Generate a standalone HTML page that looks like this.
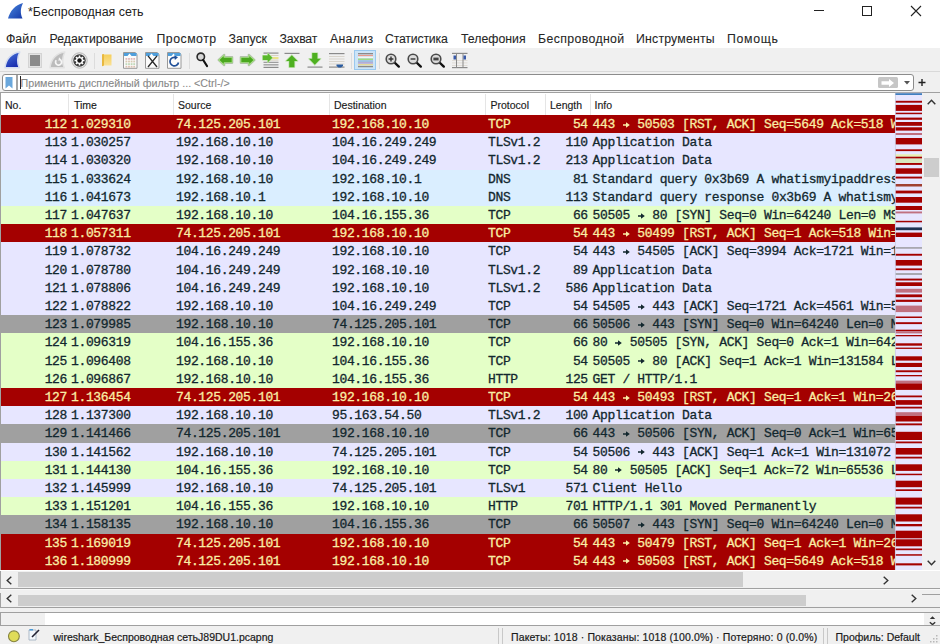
<!DOCTYPE html><html><head><meta charset="utf-8"><style>
*{margin:0;padding:0;box-sizing:border-box}
html,body{width:940px;height:644px;overflow:hidden;background:#f0f0f0;font-family:"Liberation Sans",sans-serif;color:#000;position:relative}
.a{position:absolute;white-space:pre}
.mi{position:absolute;font-size:12.3px;color:#262626;line-height:14px;white-space:pre;-webkit-text-stroke:0.08px #262626}
.hd{position:absolute;top:99px;font-size:10.5px;color:#1a1a1a;line-height:12px;white-space:pre;-webkit-text-stroke:0.15px #1a1a1a}
.sep{position:absolute;top:94px;width:1px;height:21px;background:#e5e5e5}
.row{position:absolute;left:1px;width:894px;height:18.2px;overflow:hidden;font-family:"Liberation Mono",monospace;font-size:13px;letter-spacing:-0.35px;line-height:19px}
.row span{position:absolute;top:0;white-space:pre;-webkit-text-stroke:0.3px currentColor}
.r{background:#a40000;color:#faeea6}
.l{background:#e7e6ff;color:#12272e}
.b{background:#daeeff;color:#12272e}
.g{background:#e4ffc7;color:#12272e}
.k{background:#a0a0a0;color:#12272e}
.tsep{position:absolute;top:53px;width:1px;height:16px;background:#dcdcdc}
svg{position:absolute;overflow:visible}
</style></head><body>
<div class="a" style="left:0;top:0;width:940px;height:48px;background:#fff"></div>
<svg style="left:7px;top:2px" width="18" height="18" viewBox="0 0 18 18"><defs><linearGradient id="fin" x1="0" y1="0" x2="1" y2="1"><stop offset="0" stop-color="#4a8ae0"/><stop offset="1" stop-color="#1538a8"/></linearGradient></defs><path d="M1 16.5 C3 9 8 3 16 1 C13.5 6 13 11 15.5 16.5 Z" fill="url(#fin)"/></svg>
<div class="a" style="left:28px;top:4.7px;font-size:12.4px;color:#222;line-height:14px">*Беспроводная сеть</div>
<div class="a" style="left:814px;top:10px;width:10px;height:1px;background:#222"></div>
<div class="a" style="left:862px;top:6px;width:10px;height:10px;border:1px solid #222"></div>
<svg style="left:910px;top:5px" width="12" height="12" viewBox="0 0 12 12"><path d="M1 1 L11 11 M11 1 L1 11" stroke="#222" stroke-width="1.1"/></svg>
<div class="mi" style="left:6px;top:31.5px;letter-spacing:0px">Файл</div>
<div class="mi" style="left:49.5px;top:31.5px;letter-spacing:0px">Редактирование</div>
<div class="mi" style="left:156.5px;top:31.5px;letter-spacing:0.5px">Просмотр</div>
<div class="mi" style="left:228.5px;top:31.5px;letter-spacing:0px">Запуск</div>
<div class="mi" style="left:279.5px;top:31.5px;letter-spacing:-0.25px">Захват</div>
<div class="mi" style="left:330px;top:31.5px;letter-spacing:0.3px">Анализ</div>
<div class="mi" style="left:385px;top:31.5px;letter-spacing:-0.2px">Статистика</div>
<div class="mi" style="left:461px;top:31.5px;letter-spacing:0px">Телефония</div>
<div class="mi" style="left:538px;top:31.5px;letter-spacing:0.38px">Беспроводной</div>
<div class="mi" style="left:636px;top:31.5px;letter-spacing:0.2px">Инструменты</div>
<div class="mi" style="left:727px;top:31.5px;letter-spacing:0.7px">Помощь</div>
<div class="a" style="left:0;top:48px;width:940px;height:24px;background:#f0f0f0;border-bottom:1px solid #d9d9d9"></div>
<svg style="left:4px;top:51px" width="17" height="18" viewBox="0 0 17 18"><defs><linearGradient id="fb" x1="0" y1="0" x2="0.5" y2="1"><stop offset="0" stop-color="#4a78dc"/><stop offset="1" stop-color="#1a2eb0"/></linearGradient></defs><path d="M1 16.8 C1.8 8.5 7.5 1.8 15.8 1 C13.6 5.5 13 11.5 15.2 16.8 Z" fill="url(#fb)" stroke="#d4dcf0" stroke-width="1.5" stroke-linejoin="round"/></svg>
<div class="a" style="left:27.5px;top:53px;width:14.5px;height:14.5px;background:#e4e4e4;border:1px solid #d4d4d4"></div>
<div class="a" style="left:29.5px;top:55px;width:10.5px;height:10.5px;background:#8c8c8c"></div>
<svg style="left:49px;top:51px" width="17" height="18" viewBox="0 0 17 18"><path d="M1 16.8 C1.8 8.5 7.5 1.8 15.8 1 C13.6 5.5 13 11.5 15.2 16.8 Z" fill="#bcbcbc" stroke="#e2e2e2" stroke-width="1.5" stroke-linejoin="round"/><path d="M7.3 9.2 A3 3 0 1 0 11.4 8.8" fill="none" stroke="#f6f6f6" stroke-width="1.7"/><path d="M10 6.3 L12.6 9 L9.4 9.8 Z" fill="#f6f6f6"/></svg>
<svg style="left:71px;top:52px" width="17" height="17" viewBox="0 0 17 17"><circle cx="8.5" cy="8.5" r="7.7" fill="#ececec" stroke="#b4b4b4" stroke-width="1"/><circle cx="8.5" cy="8.5" r="6.2" fill="#3c3c3c"/><g fill="#fff"><circle cx="8.5" cy="8.5" r="3.6"/><rect x="7.75" y="3.5" width="1.5" height="10" transform="rotate(0 8.5 8.5)"/><rect x="7.75" y="3.5" width="1.5" height="10" transform="rotate(45 8.5 8.5)"/><rect x="7.75" y="3.5" width="1.5" height="10" transform="rotate(90 8.5 8.5)"/><rect x="7.75" y="3.5" width="1.5" height="10" transform="rotate(135 8.5 8.5)"/></g><circle cx="8.5" cy="8.5" r="2.2" fill="#151515"/></svg>
<div class="tsep" style="left:94px"></div>
<svg style="left:101px;top:53px" width="12" height="14" viewBox="0 0 12 14"><defs><linearGradient id="fo" x1="0" y1="0" x2="0" y2="1"><stop offset="0" stop-color="#f6cf5a"/><stop offset="1" stop-color="#fbe39a"/></linearGradient></defs><path d="M1 1.5 H10.5 V12.5 H3 L1 13.2 Z" fill="url(#fo)"/><path d="M1 1.5 L3 1 V12.5 L1 13.2Z" fill="#e8b840"/></svg>
<svg style="left:122.5px;top:52px" width="15" height="17" viewBox="0 0 15 17"><path d="M0.5 0.5 H12.2 L14 2.3 V16.3 H0.5 Z" fill="#fbfbfb" stroke="#8e8e8e" stroke-width="0.9"/><rect x="1" y="1" width="12.5" height="3" fill="#4f9fdc"/><path d="M4.5 4 L6.5 1.6 L8.5 4 Z" fill="#fff"/><rect x="2.5" y="6.0" width="1.8" height="1.8" fill="#e0b8b8"/><rect x="5.1" y="6.0" width="1.8" height="1.8" fill="#e0b8b8"/><rect x="7.7" y="6.0" width="1.8" height="1.8" fill="#e0b8b8"/><rect x="10.3" y="6.0" width="1.8" height="1.8" fill="#e0b8b8"/><rect x="2.5" y="8.6" width="1.8" height="1.8" fill="#d8c8b0"/><rect x="5.1" y="8.6" width="1.8" height="1.8" fill="#d8c8b0"/><rect x="7.7" y="8.6" width="1.8" height="1.8" fill="#d8c8b0"/><rect x="10.3" y="8.6" width="1.8" height="1.8" fill="#d8c8b0"/><rect x="2.5" y="11.2" width="1.8" height="1.8" fill="#c0d8b8"/><rect x="5.1" y="11.2" width="1.8" height="1.8" fill="#c0d8b8"/><rect x="7.7" y="11.2" width="1.8" height="1.8" fill="#c0d8b8"/><rect x="10.3" y="11.2" width="1.8" height="1.8" fill="#c0d8b8"/><rect x="2.5" y="13.8" width="1.8" height="1.8" fill="#dcc0b0"/><rect x="5.1" y="13.8" width="1.8" height="1.8" fill="#dcc0b0"/><rect x="7.7" y="13.8" width="1.8" height="1.8" fill="#dcc0b0"/><rect x="10.3" y="13.8" width="1.8" height="1.8" fill="#dcc0b0"/></svg>
<svg style="left:144.5px;top:52px" width="15" height="17" viewBox="0 0 15 17"><path d="M0.5 0.5 H12.2 L14 2.3 V16.3 H0.5 Z" fill="#fbfbfb" stroke="#8e8e8e" stroke-width="0.9"/><rect x="1" y="1" width="12.5" height="3" fill="#4f9fdc"/><path d="M4.5 4 L6.5 1.6 L8.5 4 Z" fill="#fff"/><path d="M3 3.8 L12 15 M12 3.8 L3 15" stroke="#2a2a2a" stroke-width="1.35"/></svg>
<svg style="left:166.5px;top:52px" width="15" height="17" viewBox="0 0 15 17"><path d="M0.5 0.5 H12.2 L14 2.3 V16.3 H0.5 Z" fill="#fbfbfb" stroke="#8e8e8e" stroke-width="0.9"/><rect x="1" y="1" width="12.5" height="3" fill="#4f9fdc"/><path d="M4.5 4 L6.5 1.6 L8.5 4 Z" fill="#fff"/><path d="M11.5 10.5 A4.3 4.3 0 1 1 8.8 5.6" fill="none" stroke="#1f4f98" stroke-width="1.7"/><path d="M7.3 3.2 L11 5.3 L7.9 8 Z" fill="#1f4f98"/></svg>
<div class="tsep" style="left:188.5px"></div>
<svg style="left:196px;top:52px" width="13" height="16" viewBox="0 0 13 16"><circle cx="4.8" cy="4.8" r="3.7" fill="#d6d6d6" stroke="#2a2a2a" stroke-width="1.6"/><path d="M7.2 8 L11 14" stroke="#111" stroke-width="2.2" stroke-linecap="round"/></svg>
<svg style="left:216.5px;top:53px" width="17" height="14" viewBox="0 0 17 14"><g><path d="M1.6 7 L7.2 1.8 V4.2 H15.2 V9.8 H7.2 V12.2 Z" fill="none" stroke="#b4bab4" stroke-width="2.2" stroke-linejoin="round"/><path d="M1.6 7 L7.2 1.8 V4.2 H15.2 V9.8 H7.2 V12.2 Z" fill="#4aa81e" stroke="#a8dc88" stroke-width="1.1" stroke-linejoin="round"/></g></svg>
<svg style="left:238.5px;top:53px" width="17" height="14" viewBox="0 0 17 14"><g transform="translate(17 0) scale(-1 1)"><path d="M1.6 7 L7.2 1.8 V4.2 H15.2 V9.8 H7.2 V12.2 Z" fill="none" stroke="#b4bab4" stroke-width="2.2" stroke-linejoin="round"/><path d="M1.6 7 L7.2 1.8 V4.2 H15.2 V9.8 H7.2 V12.2 Z" fill="#4aa81e" stroke="#a8dc88" stroke-width="1.1" stroke-linejoin="round"/></g></svg>
<svg style="left:262px;top:52px" width="17" height="17" viewBox="0 0 17 17"><g fill="#8a8a8a"><rect x="1.5" y="0.5" width="15" height="1.2"/><rect x="1.5" y="9.8" width="15" height="1"/><rect x="1.5" y="12.3" width="15" height="1.1"/><rect x="1.5" y="14.8" width="15" height="1.2"/></g><g fill="#d8d0c0"><rect x="1.5" y="3" width="15" height="1"/><rect x="8" y="7.6" width="8.5" height="1"/></g><rect x="9" y="5.2" width="7.5" height="1.6" fill="#e8e070"/><path d="M0.8 3.6 H5.8 V1.3 L10.3 5.8 L5.8 10.3 V8 H0.8 Z" fill="#5ab82c" stroke="#b8e2a0" stroke-width="1.2" stroke-linejoin="round" paint-order="stroke"/></svg>
<svg style="left:284px;top:52px" width="16" height="17" viewBox="0 0 16 17"><rect x="0.5" y="0.8" width="15" height="1.2" fill="#8a8a8a"/><path d="M7.8 3.2 L13.6 9 H10.4 V15.3 H5.2 V9 H2 Z" fill="#4eb020" stroke="#c4e4b4" stroke-width="1.6" stroke-linejoin="round" paint-order="stroke"/></svg>
<svg style="left:306.5px;top:52px" width="16" height="17" viewBox="0 0 16 17"><rect x="0.5" y="14.5" width="15" height="1.2" fill="#8a8a8a"/><path d="M5.2 1 H10.4 V6.8 H13.6 L7.8 12.8 L2 6.8 H5.2 Z" fill="#4eb020" stroke="#c4e4b4" stroke-width="1.6" stroke-linejoin="round" paint-order="stroke"/></svg>
<svg style="left:329px;top:52px" width="16" height="17" viewBox="0 0 16 17"><rect x="0" y="1" width="15.5" height="1.2" fill="#8a8a8a"/><g fill="#d8d4cc"><rect x="0" y="4" width="15.5" height="1"/><rect x="0" y="6.5" width="15.5" height="1"/><rect x="0" y="9" width="15.5" height="1"/><rect x="0" y="11.5" width="15.5" height="1"/></g><rect x="0" y="14.5" width="15.5" height="1.2" fill="#8a8a8a"/><path d="M7.5 12.5 H14 V14 L12 15.5 H9.5 L7.5 14 Z" fill="#2a5ca0"/></svg>
<div class="tsep" style="left:350.5px"></div>
<div class="a" style="left:354px;top:50px;width:22px;height:20px;background:#cce4f7;border:1px solid #99c8ee"></div>
<svg style="left:358px;top:53px" width="15" height="15" viewBox="0 0 15 15"><rect x="0" y="0.00" width="15" height="1.3" fill="#8a8a8a"/><rect x="0" y="1.85" width="15" height="1.3" fill="#e89a8a"/><rect x="0" y="3.70" width="15" height="1.3" fill="#f4f4f4"/><rect x="0" y="5.55" width="15" height="1.3" fill="#9ad870"/><rect x="0" y="7.40" width="15" height="1.3" fill="#8ab0d8"/><rect x="0" y="9.25" width="15" height="1.3" fill="#b098c8"/><rect x="0" y="11.10" width="15" height="1.3" fill="#e8d890"/><rect x="0" y="12.95" width="15" height="1.3" fill="#8a8a8a"/></svg>
<div class="tsep" style="left:379px"></div>
<svg style="left:384.5px;top:52.5px" width="16" height="15" viewBox="0 0 16 15"><path d="M8.5 8.5 L13.8 13.6" stroke="#111" stroke-width="2.4" stroke-linecap="round"/><circle cx="6" cy="6" r="4.8" fill="#dcdcdc" stroke="#4a4a4a" stroke-width="1.6"/><path d="M6 3.6 V8.4 M3.6 6 H8.4" stroke="#333" stroke-width="1.4"/></svg>
<svg style="left:407px;top:52.5px" width="16" height="15" viewBox="0 0 16 15"><path d="M8.5 8.5 L13.8 13.6" stroke="#111" stroke-width="2.4" stroke-linecap="round"/><circle cx="6" cy="6" r="4.8" fill="#dcdcdc" stroke="#4a4a4a" stroke-width="1.6"/><path d="M3.6 6 H8.4" stroke="#333" stroke-width="1.4"/></svg>
<svg style="left:429.5px;top:52.5px" width="16" height="15" viewBox="0 0 16 15"><path d="M8.5 8.5 L13.8 13.6" stroke="#111" stroke-width="2.4" stroke-linecap="round"/><circle cx="6" cy="6" r="4.8" fill="#dcdcdc" stroke="#4a4a4a" stroke-width="1.6"/><rect x="3.4" y="4.6" width="5.2" height="2.8" fill="#444"/></svg>
<svg style="left:452px;top:52px" width="16" height="17" viewBox="0 0 16 17"><rect x="0" y="0.8" width="15.5" height="1.2" fill="#8a8a8a"/><rect x="0" y="15" width="15.5" height="1.2" fill="#8a8a8a"/><g fill="#dcd8d0"><rect x="0" y="8" width="15.5" height="0.8"/><rect x="0" y="10.5" width="15.5" height="0.8"/><rect x="0" y="13" width="15.5" height="0.8"/></g><rect x="4" y="2" width="1" height="13" fill="#8a8a8a"/><rect x="10.5" y="2" width="1" height="13" fill="#8a8a8a"/><rect x="1.5" y="3.5" width="2.5" height="4" fill="#3a5aa8"/><rect x="11.5" y="3.5" width="2.5" height="4" fill="#3a5aa8"/></svg>
<div class="a" style="left:2px;top:74px;width:912px;height:17px;background:#fff;border:1px solid #8c8c8c;border-radius:3px"></div>
<svg style="left:5px;top:77px" width="8" height="12" viewBox="0 0 8 12"><path d="M0.5 0 H7.5 V11.5 L4 8.5 L0.5 11.5 Z" fill="#6aa7dc"/></svg>
<div class="a" style="left:16px;top:75px;width:1.6px;height:15px;background:#a4a4a4"></div>
<div class="a" style="left:20px;top:76px;width:1px;height:13px;background:#222"></div>
<div class="a" style="left:20.5px;top:77px;font-size:10.7px;color:#888;line-height:13px;-webkit-text-stroke:0.1px #888">Применить дисплейный фильтр ... &lt;Ctrl-/&gt;</div>
<div class="a" style="left:878px;top:77px;width:19.5px;height:11px;background:#c6c6c6;border-radius:1.5px"></div>
<svg style="left:881px;top:77.5px" width="14" height="10" viewBox="0 0 14 10"><path d="M0.5 3.2 H8 V1 L13 5 L8 9 V6.8 H0.5 Z" fill="#fff"/></svg>
<svg style="left:904px;top:81px" width="6" height="4" viewBox="0 0 6 4"><path d="M0 0 H6 L3 3.5 Z" fill="#555"/></svg>
<svg style="left:917.5px;top:79px" width="8" height="7" viewBox="0 0 8 7"><path d="M4 0 V7 M0.5 3.5 H7.5" stroke="#222" stroke-width="1.4"/></svg>
<div class="a" style="left:0;top:92px;width:940px;height:1px;background:#a0a0a0"></div>
<div class="a" style="left:0;top:93px;width:923px;height:478px;background:#fff;border-left:1px solid #a0a0a0"></div>
<div class="sep" style="left:68px"></div>
<div class="sep" style="left:173px"></div>
<div class="sep" style="left:329px"></div>
<div class="sep" style="left:485px"></div>
<div class="sep" style="left:545px"></div>
<div class="sep" style="left:590px"></div>
<div class="hd" style="left:5px">No.</div>
<div class="hd" style="left:74px">Time</div>
<div class="hd" style="left:178px">Source</div>
<div class="hd" style="left:334px">Destination</div>
<div class="hd" style="left:490.5px">Protocol</div>
<div class="hd" style="left:550px">Length</div>
<div class="hd" style="left:594.5px">Info</div>
<div class="row r" style="top:115.00px"><span style="right:828px">112</span><span style="left:70px">1.029310</span><span style="left:175px">74.125.205.101</span><span style="left:331px">192.168.10.10</span><span style="left:487px">TCP</span><span style="right:307.20000000000005px">54</span><span style="left:591.6px">443 <i style="display:inline-block;width:7.45px;height:18px;position:relative;vertical-align:top"><svg style="left:0.5px;top:6.7px" width="7" height="6" viewBox="0 0 7 6"><path d="M0 3 H4.2" stroke="currentColor" stroke-width="1.5"/><path d="M3 0.2 L6.8 3 L3 5.8 Z" fill="currentColor"/></svg></i> 50503 [RST, ACK] Seq=5649 Ack=518 Win=0 Len=0</span></div>
<div class="row l" style="top:133.20px"><span style="right:828px">113</span><span style="left:70px">1.030257</span><span style="left:175px">192.168.10.10</span><span style="left:331px">104.16.249.249</span><span style="left:487px">TLSv1.2</span><span style="right:307.20000000000005px">110</span><span style="left:591.6px">Application Data</span></div>
<div class="row l" style="top:151.40px"><span style="right:828px">114</span><span style="left:70px">1.030320</span><span style="left:175px">192.168.10.10</span><span style="left:331px">104.16.249.249</span><span style="left:487px">TLSv1.2</span><span style="right:307.20000000000005px">213</span><span style="left:591.6px">Application Data</span></div>
<div class="row b" style="top:169.60px"><span style="right:828px">115</span><span style="left:70px">1.033624</span><span style="left:175px">192.168.10.10</span><span style="left:331px">192.168.10.1</span><span style="left:487px">DNS</span><span style="right:307.20000000000005px">81</span><span style="left:591.6px">Standard query 0x3b69 A whatismyipaddress.com</span></div>
<div class="row b" style="top:187.80px"><span style="right:828px">116</span><span style="left:70px">1.041673</span><span style="left:175px">192.168.10.1</span><span style="left:331px">192.168.10.10</span><span style="left:487px">DNS</span><span style="right:307.20000000000005px">113</span><span style="left:591.6px">Standard query response 0x3b69 A whatismyipaddress.com</span></div>
<div class="row g" style="top:206.00px"><span style="right:828px">117</span><span style="left:70px">1.047637</span><span style="left:175px">192.168.10.10</span><span style="left:331px">104.16.155.36</span><span style="left:487px">TCP</span><span style="right:307.20000000000005px">66</span><span style="left:591.6px">50505 <i style="display:inline-block;width:7.45px;height:18px;position:relative;vertical-align:top"><svg style="left:0.5px;top:6.7px" width="7" height="6" viewBox="0 0 7 6"><path d="M0 3 H4.2" stroke="currentColor" stroke-width="1.5"/><path d="M3 0.2 L6.8 3 L3 5.8 Z" fill="currentColor"/></svg></i> 80 [SYN] Seq=0 Win=64240 Len=0 MSS=1460</span></div>
<div class="row r" style="top:224.20px"><span style="right:828px">118</span><span style="left:70px">1.057311</span><span style="left:175px">74.125.205.101</span><span style="left:331px">192.168.10.10</span><span style="left:487px">TCP</span><span style="right:307.20000000000005px">54</span><span style="left:591.6px">443 <i style="display:inline-block;width:7.45px;height:18px;position:relative;vertical-align:top"><svg style="left:0.5px;top:6.7px" width="7" height="6" viewBox="0 0 7 6"><path d="M0 3 H4.2" stroke="currentColor" stroke-width="1.5"/><path d="M3 0.2 L6.8 3 L3 5.8 Z" fill="currentColor"/></svg></i> 50499 [RST, ACK] Seq=1 Ack=518 Win=0 Len=0</span></div>
<div class="row l" style="top:242.40px"><span style="right:828px">119</span><span style="left:70px">1.078732</span><span style="left:175px">104.16.249.249</span><span style="left:331px">192.168.10.10</span><span style="left:487px">TCP</span><span style="right:307.20000000000005px">54</span><span style="left:591.6px">443 <i style="display:inline-block;width:7.45px;height:18px;position:relative;vertical-align:top"><svg style="left:0.5px;top:6.7px" width="7" height="6" viewBox="0 0 7 6"><path d="M0 3 H4.2" stroke="currentColor" stroke-width="1.5"/><path d="M3 0.2 L6.8 3 L3 5.8 Z" fill="currentColor"/></svg></i> 54505 [ACK] Seq=3994 Ack=1721 Win=128 Len=0</span></div>
<div class="row l" style="top:260.60px"><span style="right:828px">120</span><span style="left:70px">1.078780</span><span style="left:175px">104.16.249.249</span><span style="left:331px">192.168.10.10</span><span style="left:487px">TLSv1.2</span><span style="right:307.20000000000005px">89</span><span style="left:591.6px">Application Data</span></div>
<div class="row l" style="top:278.80px"><span style="right:828px">121</span><span style="left:70px">1.078806</span><span style="left:175px">104.16.249.249</span><span style="left:331px">192.168.10.10</span><span style="left:487px">TLSv1.2</span><span style="right:307.20000000000005px">586</span><span style="left:591.6px">Application Data</span></div>
<div class="row l" style="top:297.00px"><span style="right:828px">122</span><span style="left:70px">1.078822</span><span style="left:175px">192.168.10.10</span><span style="left:331px">104.16.249.249</span><span style="left:487px">TCP</span><span style="right:307.20000000000005px">54</span><span style="left:591.6px">54505 <i style="display:inline-block;width:7.45px;height:18px;position:relative;vertical-align:top"><svg style="left:0.5px;top:6.7px" width="7" height="6" viewBox="0 0 7 6"><path d="M0 3 H4.2" stroke="currentColor" stroke-width="1.5"/><path d="M3 0.2 L6.8 3 L3 5.8 Z" fill="currentColor"/></svg></i> 443 [ACK] Seq=1721 Ack=4561 Win=512 Len=0</span></div>
<div class="row k" style="top:315.20px"><span style="right:828px">123</span><span style="left:70px">1.079985</span><span style="left:175px">192.168.10.10</span><span style="left:331px">74.125.205.101</span><span style="left:487px">TCP</span><span style="right:307.20000000000005px">66</span><span style="left:591.6px">50506 <i style="display:inline-block;width:7.45px;height:18px;position:relative;vertical-align:top"><svg style="left:0.5px;top:6.7px" width="7" height="6" viewBox="0 0 7 6"><path d="M0 3 H4.2" stroke="currentColor" stroke-width="1.5"/><path d="M3 0.2 L6.8 3 L3 5.8 Z" fill="currentColor"/></svg></i> 443 [SYN] Seq=0 Win=64240 Len=0 MSS=1460</span></div>
<div class="row g" style="top:333.40px"><span style="right:828px">124</span><span style="left:70px">1.096319</span><span style="left:175px">104.16.155.36</span><span style="left:331px">192.168.10.10</span><span style="left:487px">TCP</span><span style="right:307.20000000000005px">66</span><span style="left:591.6px">80 <i style="display:inline-block;width:7.45px;height:18px;position:relative;vertical-align:top"><svg style="left:0.5px;top:6.7px" width="7" height="6" viewBox="0 0 7 6"><path d="M0 3 H4.2" stroke="currentColor" stroke-width="1.5"/><path d="M3 0.2 L6.8 3 L3 5.8 Z" fill="currentColor"/></svg></i> 50505 [SYN, ACK] Seq=0 Ack=1 Win=64240 Len=0</span></div>
<div class="row g" style="top:351.60px"><span style="right:828px">125</span><span style="left:70px">1.096408</span><span style="left:175px">192.168.10.10</span><span style="left:331px">104.16.155.36</span><span style="left:487px">TCP</span><span style="right:307.20000000000005px">54</span><span style="left:591.6px">50505 <i style="display:inline-block;width:7.45px;height:18px;position:relative;vertical-align:top"><svg style="left:0.5px;top:6.7px" width="7" height="6" viewBox="0 0 7 6"><path d="M0 3 H4.2" stroke="currentColor" stroke-width="1.5"/><path d="M3 0.2 L6.8 3 L3 5.8 Z" fill="currentColor"/></svg></i> 80 [ACK] Seq=1 Ack=1 Win=131584 Len=0</span></div>
<div class="row g" style="top:369.80px"><span style="right:828px">126</span><span style="left:70px">1.096867</span><span style="left:175px">192.168.10.10</span><span style="left:331px">104.16.155.36</span><span style="left:487px">HTTP</span><span style="right:307.20000000000005px">125</span><span style="left:591.6px">GET / HTTP/1.1</span></div>
<div class="row r" style="top:388.00px"><span style="right:828px">127</span><span style="left:70px">1.136454</span><span style="left:175px">74.125.205.101</span><span style="left:331px">192.168.10.10</span><span style="left:487px">TCP</span><span style="right:307.20000000000005px">54</span><span style="left:591.6px">443 <i style="display:inline-block;width:7.45px;height:18px;position:relative;vertical-align:top"><svg style="left:0.5px;top:6.7px" width="7" height="6" viewBox="0 0 7 6"><path d="M0 3 H4.2" stroke="currentColor" stroke-width="1.5"/><path d="M3 0.2 L6.8 3 L3 5.8 Z" fill="currentColor"/></svg></i> 50493 [RST, ACK] Seq=1 Ack=1 Win=263 Len=0</span></div>
<div class="row l" style="top:406.20px"><span style="right:828px">128</span><span style="left:70px">1.137300</span><span style="left:175px">192.168.10.10</span><span style="left:331px">95.163.54.50</span><span style="left:487px">TLSv1.2</span><span style="right:307.20000000000005px">100</span><span style="left:591.6px">Application Data</span></div>
<div class="row k" style="top:424.40px"><span style="right:828px">129</span><span style="left:70px">1.141466</span><span style="left:175px">74.125.205.101</span><span style="left:331px">192.168.10.10</span><span style="left:487px">TCP</span><span style="right:307.20000000000005px">66</span><span style="left:591.6px">443 <i style="display:inline-block;width:7.45px;height:18px;position:relative;vertical-align:top"><svg style="left:0.5px;top:6.7px" width="7" height="6" viewBox="0 0 7 6"><path d="M0 3 H4.2" stroke="currentColor" stroke-width="1.5"/><path d="M3 0.2 L6.8 3 L3 5.8 Z" fill="currentColor"/></svg></i> 50506 [SYN, ACK] Seq=0 Ack=1 Win=65535 Len=0</span></div>
<div class="row l" style="top:442.60px"><span style="right:828px">130</span><span style="left:70px">1.141562</span><span style="left:175px">192.168.10.10</span><span style="left:331px">74.125.205.101</span><span style="left:487px">TCP</span><span style="right:307.20000000000005px">54</span><span style="left:591.6px">50506 <i style="display:inline-block;width:7.45px;height:18px;position:relative;vertical-align:top"><svg style="left:0.5px;top:6.7px" width="7" height="6" viewBox="0 0 7 6"><path d="M0 3 H4.2" stroke="currentColor" stroke-width="1.5"/><path d="M3 0.2 L6.8 3 L3 5.8 Z" fill="currentColor"/></svg></i> 443 [ACK] Seq=1 Ack=1 Win=131072 Len=0</span></div>
<div class="row g" style="top:460.80px"><span style="right:828px">131</span><span style="left:70px">1.144130</span><span style="left:175px">104.16.155.36</span><span style="left:331px">192.168.10.10</span><span style="left:487px">TCP</span><span style="right:307.20000000000005px">54</span><span style="left:591.6px">80 <i style="display:inline-block;width:7.45px;height:18px;position:relative;vertical-align:top"><svg style="left:0.5px;top:6.7px" width="7" height="6" viewBox="0 0 7 6"><path d="M0 3 H4.2" stroke="currentColor" stroke-width="1.5"/><path d="M3 0.2 L6.8 3 L3 5.8 Z" fill="currentColor"/></svg></i> 50505 [ACK] Seq=1 Ack=72 Win=65536 Len=0</span></div>
<div class="row l" style="top:479.00px"><span style="right:828px">132</span><span style="left:70px">1.145999</span><span style="left:175px">192.168.10.10</span><span style="left:331px">74.125.205.101</span><span style="left:487px">TLSv1</span><span style="right:307.20000000000005px">571</span><span style="left:591.6px">Client Hello</span></div>
<div class="row g" style="top:497.20px"><span style="right:828px">133</span><span style="left:70px">1.151201</span><span style="left:175px">104.16.155.36</span><span style="left:331px">192.168.10.10</span><span style="left:487px">HTTP</span><span style="right:307.20000000000005px">701</span><span style="left:591.6px">HTTP/1.1 301 Moved Permanently</span></div>
<div class="row k" style="top:515.40px"><span style="right:828px">134</span><span style="left:70px">1.158135</span><span style="left:175px">192.168.10.10</span><span style="left:331px">104.16.155.36</span><span style="left:487px">TCP</span><span style="right:307.20000000000005px">66</span><span style="left:591.6px">50507 <i style="display:inline-block;width:7.45px;height:18px;position:relative;vertical-align:top"><svg style="left:0.5px;top:6.7px" width="7" height="6" viewBox="0 0 7 6"><path d="M0 3 H4.2" stroke="currentColor" stroke-width="1.5"/><path d="M3 0.2 L6.8 3 L3 5.8 Z" fill="currentColor"/></svg></i> 443 [SYN] Seq=0 Win=64240 Len=0 MSS=1460</span></div>
<div class="row r" style="top:533.60px"><span style="right:828px">135</span><span style="left:70px">1.169019</span><span style="left:175px">74.125.205.101</span><span style="left:331px">192.168.10.10</span><span style="left:487px">TCP</span><span style="right:307.20000000000005px">54</span><span style="left:591.6px">443 <i style="display:inline-block;width:7.45px;height:18px;position:relative;vertical-align:top"><svg style="left:0.5px;top:6.7px" width="7" height="6" viewBox="0 0 7 6"><path d="M0 3 H4.2" stroke="currentColor" stroke-width="1.5"/><path d="M3 0.2 L6.8 3 L3 5.8 Z" fill="currentColor"/></svg></i> 50479 [RST, ACK] Seq=1 Ack=1 Win=263 Len=0</span></div>
<div class="row r" style="top:551.80px"><span style="right:828px">136</span><span style="left:70px">1.180999</span><span style="left:175px">74.125.205.101</span><span style="left:331px">192.168.10.10</span><span style="left:487px">TCP</span><span style="right:307.20000000000005px">54</span><span style="left:591.6px">443 <i style="display:inline-block;width:7.45px;height:18px;position:relative;vertical-align:top"><svg style="left:0.5px;top:6.7px" width="7" height="6" viewBox="0 0 7 6"><path d="M0 3 H4.2" stroke="currentColor" stroke-width="1.5"/><path d="M3 0.2 L6.8 3 L3 5.8 Z" fill="currentColor"/></svg></i> 50503 [RST, ACK] Seq=5649 Ack=518 Win=0 Len=0</span></div>
<svg style="left:895px;top:93px" width="28" height="478" viewBox="0 0 28 478">
<rect x="0" y="0" width="27.5" height="478" fill="#e7e6ff"/>
<rect x="0" y="0" width="27.5" height="2" fill="#3f7fc0"/>
<rect x="0.5" y="7.8" width="27" height="1.9" fill="#a40000"/>
<rect x="0.5" y="11.9" width="27" height="6.0" fill="#a40000"/>
<rect x="0.5" y="19.7" width="27" height="1.5" fill="#a40000"/>
<rect x="0.5" y="24.6" width="27" height="2.2" fill="#a40000"/>
<rect x="0.5" y="29.0" width="27" height="3.8" fill="#a40000"/>
<rect x="0.5" y="34.3" width="27" height="3.3" fill="#a40000"/>
<rect x="0.5" y="40.0" width="27" height="2.0" fill="#c07080"/>
<rect x="0.5" y="45.0" width="27" height="6.4" fill="#a40000"/>
<rect x="0.5" y="56.3" width="27" height="1.8" fill="#a40000"/>
<rect x="0.5" y="61.3" width="27" height="2.4" fill="#e8f0b0"/>
<rect x="0.5" y="63.7" width="27" height="1.9" fill="#a40000"/>
<rect x="0.5" y="65.6" width="27" height="4.4" fill="#d8e8c0"/>
<rect x="0.5" y="70.0" width="27" height="1.9" fill="#a40000"/>
<rect x="0.5" y="75.3" width="27" height="5.5" fill="#a40000"/>
<rect x="0.5" y="83.6" width="27" height="1.9" fill="#a40000"/>
<rect x="0.5" y="91.0" width="27" height="2.5" fill="#a04030"/>
<rect x="0.5" y="97.6" width="27" height="2.8" fill="#a40000"/>
<rect x="0.5" y="104.0" width="27" height="5.7" fill="#a40000"/>
<rect x="0.5" y="113.0" width="27" height="4.0" fill="#a40000"/>
<rect x="0.5" y="118.5" width="27" height="1.9" fill="#c07080"/>
<rect x="0.5" y="127.8" width="27" height="1.5" fill="#a40000"/>
<rect x="0.5" y="134.4" width="27" height="2.8" fill="#203050"/>
<rect x="0.5" y="139.6" width="27" height="4.4" fill="#a40000"/>
<rect x="0.5" y="154.0" width="27" height="1.8" fill="#a8a8b0"/>
<rect x="0.5" y="160.8" width="27" height="1.9" fill="#a40000"/>
<rect x="0.5" y="167.0" width="27" height="5.6" fill="#a40000"/>
<rect x="0.5" y="175.4" width="27" height="1.8" fill="#a40000"/>
<rect x="0.5" y="180.0" width="27" height="2.0" fill="#a8a8b0"/>
<rect x="0.5" y="185.6" width="27" height="1.9" fill="#a40000"/>
<rect x="0.5" y="189.3" width="27" height="3.7" fill="#a40000"/>
<rect x="0.5" y="195.8" width="27" height="3.8" fill="#c07080"/>
<rect x="0.5" y="201.4" width="27" height="2.8" fill="#a40000"/>
<rect x="0.5" y="206.7" width="27" height="2.2" fill="#a40000"/>
<rect x="0.5" y="212.6" width="27" height="6.5" fill="#c07080"/>
<rect x="0.5" y="223.5" width="27" height="1.5" fill="#a40000"/>
<rect x="0.5" y="229.2" width="27" height="1.9" fill="#a40000"/>
<rect x="0.5" y="236.7" width="27" height="1.5" fill="#a40000"/>
<rect x="0.5" y="238.2" width="27" height="2.2" fill="#c07080"/>
<rect x="0.5" y="242.0" width="27" height="1.3" fill="#a40000"/>
<rect x="0.5" y="250.3" width="27" height="2.4" fill="#a40000"/>
<rect x="0.5" y="254.6" width="27" height="1.3" fill="#a40000"/>
<rect x="0.5" y="263.3" width="27" height="4.3" fill="#a40000"/>
<rect x="0.5" y="269.9" width="27" height="4.1" fill="#a40000"/>
<rect x="0.5" y="277.3" width="27" height="1.9" fill="#a40000"/>
<rect x="0.5" y="282.0" width="27" height="1.3" fill="#a40000"/>
<rect x="0.5" y="287.6" width="27" height="2.8" fill="#c07080"/>
<rect x="0.5" y="290.4" width="27" height="6.5" fill="#a40000"/>
<rect x="0.5" y="302.5" width="27" height="1.8" fill="#a40000"/>
<rect x="0.5" y="307.1" width="27" height="4.7" fill="#a40000"/>
<rect x="0.5" y="313.7" width="27" height="1.8" fill="#a40000"/>
<rect x="0.5" y="319.2" width="27" height="3.8" fill="#c07080"/>
<rect x="0.5" y="323.0" width="27" height="5.5" fill="#a40000"/>
<rect x="0.5" y="330.4" width="27" height="1.9" fill="#a40000"/>
<rect x="0.5" y="338.8" width="27" height="8.2" fill="#a40000"/>
<rect x="0.5" y="348.5" width="27" height="1.8" fill="#a40000"/>
<rect x="0.5" y="355.0" width="27" height="6.6" fill="#a40000"/>
<rect x="0.5" y="363.7" width="27" height="1.8" fill="#a40000"/>
<rect x="0.5" y="371.3" width="27" height="6.6" fill="#a40000"/>
<rect x="0.5" y="380.7" width="27" height="1.5" fill="#a40000"/>
<rect x="0.5" y="387.7" width="27" height="6.5" fill="#a40000"/>
<rect x="0.5" y="396.3" width="27" height="1.7" fill="#a40000"/>
<rect x="0.5" y="404.6" width="27" height="7.0" fill="#a40000"/>
<rect x="0.5" y="413.7" width="27" height="1.8" fill="#a40000"/>
<rect x="0.5" y="421.3" width="27" height="7.2" fill="#a40000"/>
<rect x="0.5" y="431.0" width="27" height="2.3" fill="#a40000"/>
<rect x="0.5" y="437.7" width="27" height="7.6" fill="#a40000"/>
<rect x="0.5" y="446.3" width="27" height="7.0" fill="#a40000"/>
<rect x="0.5" y="455.5" width="27" height="1.7" fill="#a40000"/>
<rect x="0.5" y="461.2" width="27" height="1.5" fill="#a40000"/>
<rect x="0.5" y="470.3" width="27" height="2.1" fill="#a40000"/>
<rect x="0.25" y="0" width="27.25" height="477.5" fill="none" stroke="#c0c4d8" stroke-width="0.6"/>
</svg>
<div class="a" style="left:922px;top:93px;width:18px;height:478px;background:#f0f0f0"></div>
<svg style="left:927px;top:99px" width="9" height="6" viewBox="0 0 9 6"><path d="M0.7 5.3 L4.5 1.2 L8.3 5.3" fill="none" stroke="#333" stroke-width="1.4"/></svg>
<svg style="left:927px;top:559.5px" width="9" height="6" viewBox="0 0 9 6"><path d="M0.7 0.7 L4.5 4.8 L8.3 0.7" fill="none" stroke="#333" stroke-width="1.4"/></svg>
<div class="a" style="left:923.5px;top:157.5px;width:15.5px;height:19px;background:#cdcdcd"></div>
<div class="a" style="left:0;top:570px;width:940px;height:1px;background:#fff"></div>
<div class="a" style="left:0;top:571px;width:940px;height:17px;background:#f0f0f0;border-left:1px solid #a0a0a0"></div>
<div class="a" style="left:18px;top:572px;width:725px;height:15px;background:#cdcdcd"></div>
<svg style="left:6px;top:575.5px" width="6" height="9" viewBox="0 0 6 9"><path d="M5.3 0.7 L1.2 4.5 L5.3 8.3" fill="none" stroke="#333" stroke-width="1.4"/></svg>
<svg style="left:882.5px;top:575.5px" width="6" height="9" viewBox="0 0 6 9"><path d="M0.7 0.7 L4.8 4.5 L0.7 8.3" fill="none" stroke="#333" stroke-width="1.4"/></svg>
<div class="a" style="left:0;top:588px;width:940px;height:1px;background:#a0a0a0"></div>
<div class="a" style="left:0;top:589px;width:940px;height:1px;background:#f8f8f8"></div>
<div class="a" style="left:0;top:593px;width:923px;height:14px;background:#f0f0f0;border-left:1px solid #a0a0a0"></div>
<div class="a" style="left:18px;top:594.5px;width:788px;height:11px;background:#cdcdcd"></div>
<svg style="left:6px;top:594px" width="6" height="9" viewBox="0 0 6 9"><path d="M5.3 0.7 L1.2 4.5 L5.3 8.3" fill="none" stroke="#333" stroke-width="1.4"/></svg>
<svg style="left:911px;top:594px" width="6" height="9" viewBox="0 0 6 9"><path d="M0.7 0.7 L4.8 4.5 L0.7 8.3" fill="none" stroke="#333" stroke-width="1.4"/></svg>
<div class="a" style="left:922px;top:594px;width:18px;height:1px;background:#a0a0a0"></div>
<div class="a" style="left:0;top:607px;width:940px;height:1px;background:#a0a0a0"></div>
<div class="a" style="left:0;top:612px;width:940px;height:1px;background:#a0a0a0"></div>
<div class="a" style="left:0;top:613px;width:940px;height:12px;background:#fff;border-left:1px solid #a0a0a0"></div>
<div class="a" style="left:1px;top:613px;width:44px;height:12px;background:#f0f0f0"></div>
<div class="a" style="left:924px;top:613px;width:16px;height:12px;background:#f0f0f0"></div>
<svg style="left:928.5px;top:616px" width="7" height="9" viewBox="0 0 7 9"><path d="M3.5 0.3 L6.2 3 H0.8 Z" fill="#333"/><path d="M0.8 6.3 L3.5 8.6 L6.2 6.3" fill="none" stroke="#333" stroke-width="1.4"/></svg>
<div class="a" style="left:0;top:625px;width:940px;height:1px;background:#a0a0a0"></div>
<svg style="left:7px;top:629.5px" width="14" height="13" viewBox="0 0 14 13"><circle cx="6.9" cy="6.3" r="5.4" fill="#e0dc58" stroke="#86843e" stroke-width="1.1"/></svg>
<svg style="left:28px;top:628px" width="13" height="13" viewBox="0 0 13 13"><path d="M1 2 H8 V12 H1 Z" fill="#f4f8fc" stroke="#9ab" stroke-width="0.8"/><path d="M1.5 2.5 H5 V1 H1.5Z" fill="#4a9ad8"/><path d="M4 9 L11 2" stroke="#223" stroke-width="1.6"/></svg>
<div class="a" style="left:53.5px;top:630.5px;font-size:10.5px;color:#1a1a1a;line-height:12px;-webkit-text-stroke:0.2px #1a1a1a">wireshark_Беспроводная сетьJ89DU1.pcapng</div>
<div class="a" style="left:497.5px;top:628px;width:1px;height:16px;background:#c8c8c8"></div>
<div class="a" style="left:501.5px;top:628px;width:1px;height:16px;background:#c8c8c8"></div>
<div class="a" style="left:511px;top:630.5px;font-size:10.5px;color:#1a1a1a;line-height:12px;-webkit-text-stroke:0.2px #1a1a1a;letter-spacing:0.13px">Пакеты: 1018 · Показаны: 1018 (100.0%) · Потеряно: 0 (0.0%)</div>
<div class="a" style="left:822.5px;top:628px;width:1px;height:16px;background:#c8c8c8"></div>
<div class="a" style="left:826.5px;top:628px;width:1px;height:16px;background:#c8c8c8"></div>
<div class="a" style="left:835.5px;top:630.5px;font-size:10.5px;color:#1a1a1a;line-height:12px;-webkit-text-stroke:0.2px #1a1a1a">Профиль: Default</div>
<svg style="left:929px;top:634px" width="10" height="10" viewBox="0 0 10 10"><g fill="#b8b8b8"><rect x="7" y="1" width="1.5" height="1.5"/><rect x="4" y="4" width="1.5" height="1.5"/><rect x="7" y="4" width="1.5" height="1.5"/><rect x="1" y="7" width="1.5" height="1.5"/><rect x="4" y="7" width="1.5" height="1.5"/><rect x="7" y="7" width="1.5" height="1.5"/></g></svg>
</body></html>
